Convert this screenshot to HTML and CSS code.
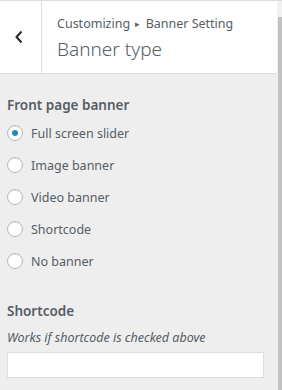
FILE: index.html
```html
<!DOCTYPE html>
<html lang="en">
<head>
    <meta charset="UTF-8">
    <meta name="viewport" content="width=device-width, initial-scale=1.0">
    <title>Banner type</title>
    <link rel="stylesheet" href="styles.css">
</head>
<body>

<div class="panel">
    <div class="panel-body">
        <div class="section-header">
            <button class="back-button" aria-label="Back">
                <svg width="10" height="14" viewBox="0 0 10 14">
                    <path d="M7.5 1.5 L2.5 7 L7.5 12.5" fill="none" stroke="#23282d" stroke-width="2"/>
                </svg>
            </button>
            <div class="section-title">
                <span class="breadcrumb">Customizing <span class="sep">&#9656;</span> Banner Setting</span>
                <h3>Banner type</h3>
            </div>
        </div>

        <div class="control">
            <span class="control-title">Front page banner</span>
            <label class="radio-row"><input type="radio" name="banner" checked> Full screen slider</label>
            <label class="radio-row"><input type="radio" name="banner"> Image banner</label>
            <label class="radio-row"><input type="radio" name="banner"> Video banner</label>
            <label class="radio-row"><input type="radio" name="banner"> Shortcode</label>
            <label class="radio-row"><input type="radio" name="banner"> No banner</label>
        </div>

        <div class="control control-text">
            <span class="control-title">Shortcode</span>
            <span class="description">Works if shortcode is checked above</span>
            <input type="text" class="text-field">
        </div>
    </div>
    <div class="scrollbar"><div class="thumb"></div></div>
</div>

</body>
</html>
```

FILE: styles.css
```css
body {
    margin: 0;
    padding: 0;
    font-family: 'Noto Sans', 'Open Sans', sans-serif;
    background-color: #eee;
    color: #555d66;
}

.panel {
    display: flex;
    height: 390px;
    overflow: hidden;
    border-top: 1px solid #ddd;
    box-sizing: border-box;
}

.panel-body {
    flex: 1;
}

.scrollbar {
    width: 5px;
    background-color: #f1f1f1;
    padding-top: 16px;
    padding-left: 1px;
    box-sizing: border-box;
}

.thumb {
    background-color: #c1c1c1;
    height: 100%;
}

.section-header {
    display: flex;
    background-color: #fff;
    border-bottom: 1px solid #ddd;
    height: 73px;
    box-sizing: border-box;
}

.back-button {
    width: 42px;
    border: none;
    border-right: 1px solid #ddd;
    background-color: #fff;
    padding: 0 4px 0 0;
    margin: 0;
    display: flex;
    align-items: center;
    justify-content: center;
}

.section-title {
    padding: 14px 0 0 15px;
}

.breadcrumb {
    display: block;
    font-size: 12.5px;
    line-height: 18px;
    color: #555d66;
}

.sep {
    font-size: 9px;
    position: relative;
    top: -1px;
    padding: 0 2px;
}

.section-title h3 {
    margin: 2px 0 0;
    font-size: 19px;
    font-weight: 300;
    line-height: 26px;
    color: #555d66;
}

.control {
    padding: 0 13px 0 7px;
    margin-top: 21px;
}

.control-text {
    margin-top: 24px;
}

.control-title {
    display: block;
    font-size: 13.5px;
    font-weight: 600;
    line-height: 20px;
    color: #555d66;
}

.radio-row {
    display: flex;
    align-items: center;
    height: 32px;
    font-size: 12.5px;
    color: #555d66;
}

.radio-row:first-of-type {
    margin-top: 2px;
}

.radio-row input {
    appearance: none;
    width: 16px;
    height: 16px;
    margin: 0 8px 0 0;
    border: 1px solid #b4b9be;
    border-radius: 50%;
    background-color: #fff;
    box-shadow: inset 0 1px 2px rgba(0, 0, 0, 0.07);
    display: flex;
    align-items: center;
    justify-content: center;
}

.radio-row input:checked::before {
    content: "";
    width: 6px;
    height: 6px;
    border-radius: 50%;
    background-color: #1e8cbe;
}

.description {
    display: block;
    font-style: italic;
    font-size: 12.5px;
    line-height: 18px;
    margin-top: 8px;
    color: #555d66;
}

.text-field {
    display: block;
    width: 100%;
    height: 26px;
    margin-top: 5px;
    border: 1px solid #ddd;
    background-color: #fff;
    box-sizing: border-box;
}
```
